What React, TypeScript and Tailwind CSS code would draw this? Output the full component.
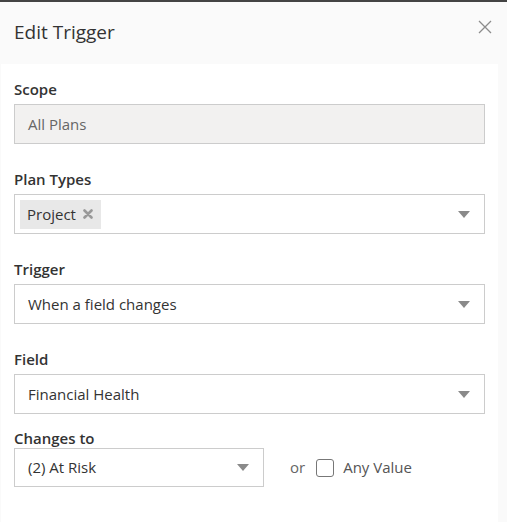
const font = { fontFamily: '"Open Sans", "Noto Sans", sans-serif' };

function Caret() {
  return (
    <svg width="12" height="7" viewBox="0 0 12 7" className="shrink-0">
      <path d="M0 0 L12 0 L6 7 Z" fill="#8a8a8a" />
    </svg>
  );
}

function Label({ children, className = "" }: { children: string; className?: string }) {
  return (
    <div className={`text-[15px] leading-[20px] font-semibold text-[#333] ${className}`}>{children}</div>
  );
}

function Select({ value }: { value: string }) {
  return (
    <div className="flex h-[40px] items-center justify-between border border-[#ccc] bg-white pl-[13px] pr-[14px]">
      <span className="text-[15px] text-[#333]">{value}</span>
      <Caret />
    </div>
  );
}

export default function App() {
  return (
    <div style={font} className="h-[522px] w-[507px] overflow-hidden border-t-2 border-[#444] bg-[#fafafa]">
      <div className="flex h-[62px] items-start justify-between pl-[14px] pr-[14px]">
        <h1 className="mt-[16px] text-[19px] leading-[28px] text-[#333]">Edit Trigger</h1>
        <button className="mt-[18px] mr-[1px]" aria-label="Close">
          <svg width="14" height="14" viewBox="0 0 14 14">
            <path d="M1 1 L13 13 M13 1 L1 13" stroke="#8c8c8c" strokeWidth="1.3" />
          </svg>
        </button>
      </div>

      <div className="ml-[1px] mr-[9px] h-full bg-white pl-[13px] pr-[13px] pt-[15px]">
        <Label className="mb-[5px]">Scope</Label>
        <div className="flex h-[40px] items-center border border-[#ccc] bg-[#f2f1f0] pl-[13px]">
          <span className="text-[15px] text-[#666]">All Plans</span>
        </div>

        <Label className="mt-[25px] mb-[5px]">Plan Types</Label>
        <div className="flex h-[40px] items-center justify-between border border-[#ccc] bg-white pl-[5px] pr-[14px]">
          <span className="flex h-[29px] items-center gap-[7px] bg-[#e8e8e8] pl-[7px] pr-[8px] text-[15px] text-[#333]">
            Project
            <svg width="10" height="10" viewBox="0 0 10 10">
              <path d="M1.5 1.5 L8.5 8.5 M8.5 1.5 L1.5 8.5" stroke="#999" strokeWidth="2.6" strokeLinecap="round" />
            </svg>
          </span>
          <Caret />
        </div>

        <Label className="mt-[25px] mb-[5px]">Trigger</Label>
        <Select value="When a field changes" />

        <Label className="mt-[25px] mb-[5px]">Field</Label>
        <Select value="Financial Health" />

        <Label className="mt-[14px]">Changes to</Label>
        <div className="flex items-center">
          <div className="flex h-[39px] w-[250px] items-center justify-between border border-[#ccc] bg-white pl-[13px] pr-[14px]">
            <span className="text-[15px] text-[#333]">(2) At Risk</span>
            <Caret />
          </div>
          <span className="ml-[26px] text-[15px] text-[#666]">or</span>
          <span className="ml-[11px] h-[18px] w-[18px] rounded-[3px] border-[1.5px] border-[#777] bg-white" />
          <span className="ml-[9px] text-[15px] text-[#555]">Any Value</span>
        </div>
      </div>
    </div>
  );
}
